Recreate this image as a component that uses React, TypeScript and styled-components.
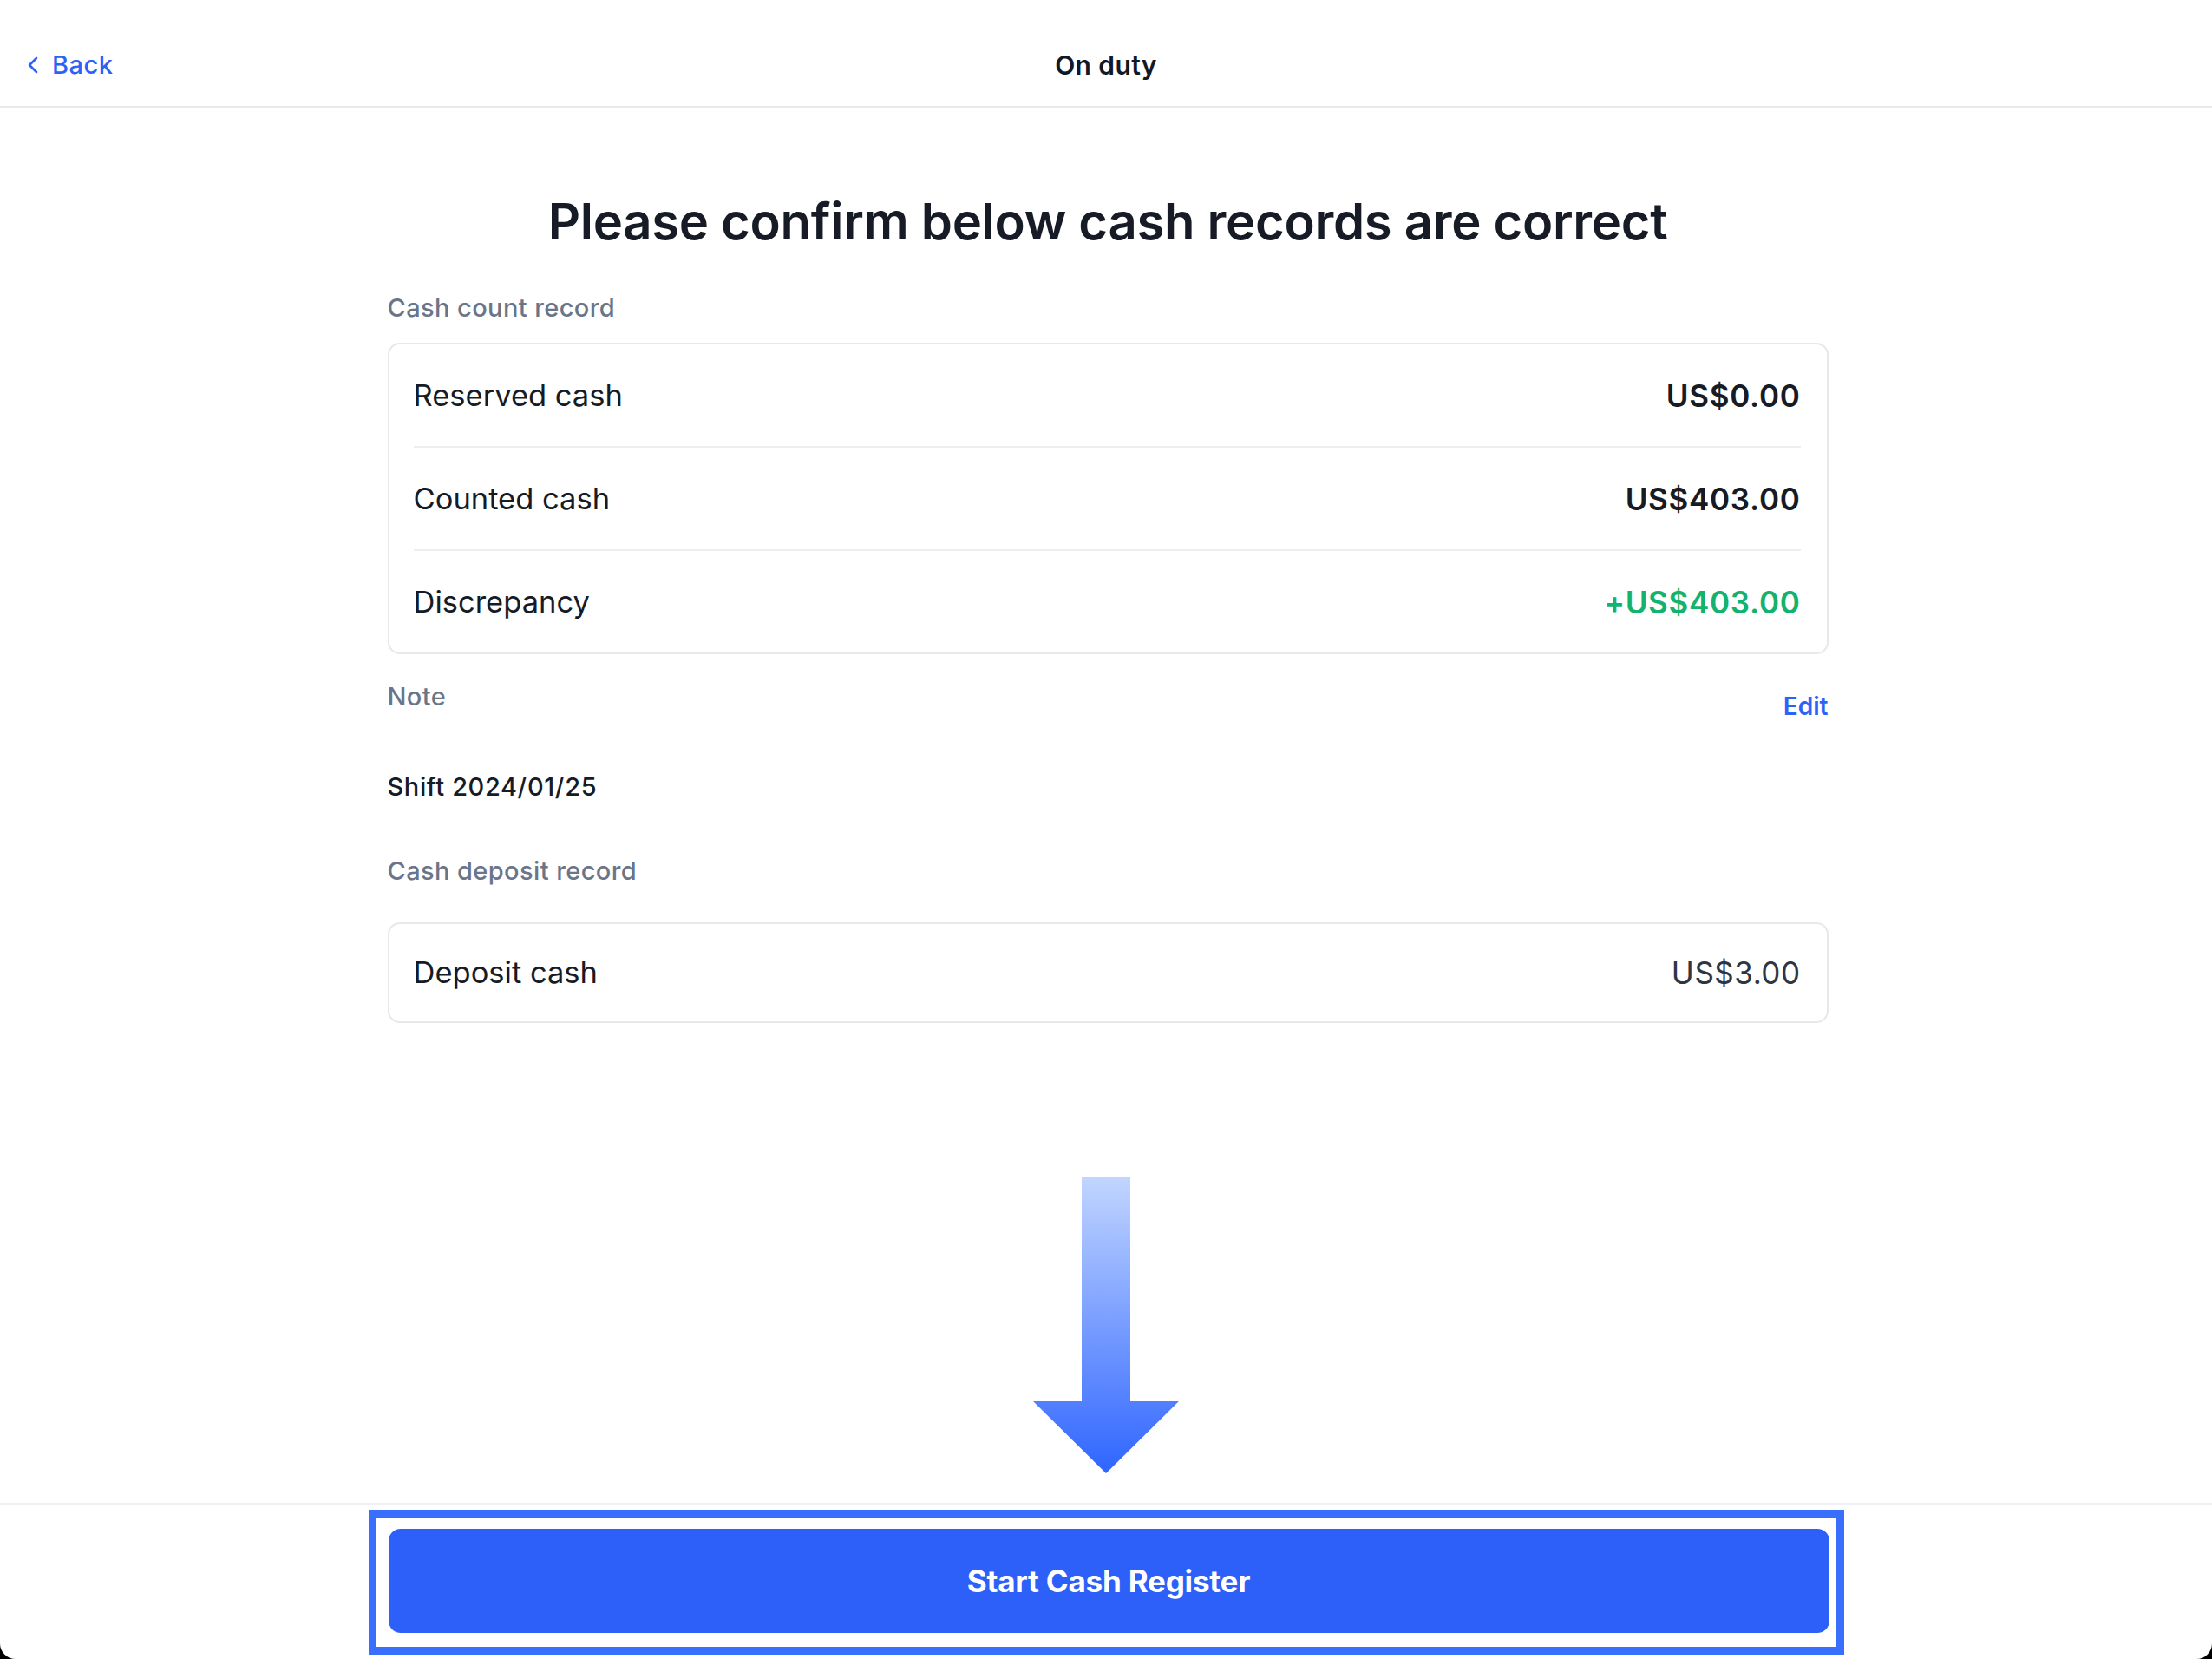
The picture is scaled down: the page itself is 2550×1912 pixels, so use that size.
import React from "react";
import styled, { createGlobalStyle } from "styled-components";

const GlobalStyle = createGlobalStyle`
  html, body {
    margin: 0;
    padding: 0;
    background: #000;
  }
  body {
    font-family: Inter, "Noto Sans", "Liberation Sans", sans-serif;
    -webkit-font-smoothing: antialiased;
  }
  * { box-sizing: border-box; }
`;

const Screen = styled.div`
  min-height: 100vh;
  display: flex;
  flex-direction: column;
  background: #ffffff;
  border-radius: 0 0 18px 18px;
  overflow: hidden;
`;

const Header = styled.header`
  height: 124px;
  flex-shrink: 0;
  border-bottom: 2px solid #e8eaee;
  display: grid;
  grid-template-columns: 1fr auto 1fr;
  align-items: end;
  padding: 0 32px 30px;
`;

const BackLink = styled.a`
  display: flex;
  align-items: center;
  gap: 16px;
  color: #2b63f6;
  font-size: 29px;
  font-weight: 500;
  letter-spacing: 0.5px;
  line-height: 34px;
  text-decoration: none;
  cursor: pointer;
  justify-self: start;
`;

const HeaderTitle = styled.div`
  font-size: 30px;
  font-weight: 600;
  letter-spacing: 0.4px;
  line-height: 34px;
  color: #111827;
`;

const Main = styled.main`
  flex: 1;
  display: flex;
  flex-direction: column;
  align-items: center;
`;

const Content = styled.div`
  width: 1661px;
  margin-left: 4px;
  display: flex;
  flex-direction: column;
`;

const Title = styled.h1`
  margin: 96px 0 0;
  font-size: 58px;
  line-height: 70px;
  font-weight: 600;
  letter-spacing: -0.3px;
  text-align: center;
  color: #161b26;
`;

const SectionLabel = styled.div<{ $gap: number }>`
  margin-top: ${(p) => p.$gap}px;
  font-size: 29px;
  line-height: 34px;
  font-weight: 500;
  letter-spacing: 0.4px;
  color: #6b7589;
`;

const Card = styled.div<{ $gap: number }>`
  margin-top: ${(p) => p.$gap}px;
  border: 2px solid #e6e8ec;
  border-radius: 14px;
  background: #fff;
  display: flex;
  flex-direction: column;
`;

const Row = styled.div<{ $height: number }>`
  flex-shrink: 0;
  height: ${(p) => p.$height}px;
  padding: 0 30px 0 28px;
  display: flex;
  align-items: center;
  justify-content: space-between;
`;

const Divider = styled.div`
  flex-shrink: 0;
  height: 2px;
  margin: 0 30px 0 28px;
  background: #eceef2;
`;

const RowLabel = styled.span`
  font-size: 34.5px;
  line-height: 40px;
  font-weight: 400;
  color: #161b26;
`;

type Tone = "strong" | "positive" | "plain";

const RowValue = styled.span<{ $tone: Tone }>`
  font-size: 35px;
  line-height: 40px;
  letter-spacing: ${(p) => (p.$tone === "plain" ? 0.5 : 0.7)}px;
  font-weight: ${(p) => (p.$tone === "plain" ? 400 : 600)};
  color: ${(p) =>
    p.$tone === "positive" ? "#14b26f" : p.$tone === "plain" ? "#2f3542" : "#161b26"};
`;

const NoteHeader = styled.div`
  margin-top: 32px;
  display: flex;
  justify-content: space-between;
  align-items: flex-start;
`;

const NoteLabel = styled.span`
  font-size: 29px;
  line-height: 34px;
  font-weight: 500;
  letter-spacing: 0.4px;
  color: #6b7589;
`;

const EditLink = styled.a`
  margin-top: 11px;
  font-size: 28px;
  line-height: 34px;
  font-weight: 600;
  color: #2b63f6;
  cursor: pointer;
`;

const NoteText = styled.div`
  margin-top: 59px;
  font-size: 29px;
  line-height: 34px;
  font-weight: 500;
  letter-spacing: 0.6px;
  color: #161b26;
`;

const ArrowWrap = styled.div`
  margin-top: 178px;
  width: 168px;
  height: 341px;
  display: flex;
`;

const Footer = styled.footer`
  flex-shrink: 0;
  border-top: 2px solid #eff1f4;
  padding: 6px 0 5px;
  display: flex;
  justify-content: center;
`;

const Highlight = styled.div`
  width: 1701px;
  border: 9px solid #3a6efc;
  padding: 13px 8px 16px 14px;
  display: flex;
`;

const PrimaryButton = styled.button`
  flex: 1;
  height: 120px;
  border: none;
  border-radius: 14px;
  background: #2c60f8;
  color: #ffffff;
  font-family: inherit;
  font-size: 35px;
  font-weight: 700;
  letter-spacing: -0.2px;
  cursor: pointer;
`;

const ChevronLeft = () => (
  <svg width="12" height="20" viewBox="0 0 12 20" fill="none">
    <polyline
      points="10,2 2,10 10,18"
      stroke="#2b63f6"
      strokeWidth="2.6"
      strokeLinecap="round"
      strokeLinejoin="round"
    />
  </svg>
);

const DownArrow = () => (
  <svg width="168" height="341" viewBox="0 0 168 341">
    <defs>
      <linearGradient id="arrowGrad" x1="0" y1="0" x2="0" y2="341" gradientUnits="userSpaceOnUse">
        <stop offset="0" stopColor="#c1d5ff" />
        <stop offset="1" stopColor="#2f65ff" />
      </linearGradient>
    </defs>
    <path d="M56 0 H112 V258 H168 L84 341 L0 258 H56 Z" fill="url(#arrowGrad)" />
  </svg>
);

const countRows: { label: string; value: string; tone: Tone }[] = [
  { label: "Reserved cash", value: "US$0.00", tone: "strong" },
  { label: "Counted cash", value: "US$403.00", tone: "strong" },
  { label: "Discrepancy", value: "+US$403.00", tone: "positive" },
];

export default function App() {
  return (
    <>
      <GlobalStyle />
      <Screen>
        <Header>
          <BackLink>
            <ChevronLeft />
            Back
          </BackLink>
          <HeaderTitle>On duty</HeaderTitle>
          <span />
        </Header>
        <Main>
          <Content>
            <Title>Please confirm below cash records are correct</Title>
            <SectionLabel $gap={48}>Cash count record</SectionLabel>
            <Card $gap={23}>
              {countRows.map((r, i) => (
                <React.Fragment key={r.label}>
                  {i > 0 && <Divider />}
                  <Row $height={117}>
                    <RowLabel>{r.label}</RowLabel>
                    <RowValue $tone={r.tone}>{r.value}</RowValue>
                  </Row>
                </React.Fragment>
              ))}
            </Card>
            <NoteHeader>
              <NoteLabel>Note</NoteLabel>
              <EditLink>Edit</EditLink>
            </NoteHeader>
            <NoteText>Shift 2024/01/25</NoteText>
            <SectionLabel $gap={63}>Cash deposit record</SectionLabel>
            <Card $gap={42}>
              <Row $height={112}>
                <RowLabel>Deposit cash</RowLabel>
                <RowValue $tone="plain">US$3.00</RowValue>
              </Row>
            </Card>
          </Content>
          <ArrowWrap>
            <DownArrow />
          </ArrowWrap>
        </Main>
        <Footer>
          <Highlight>
            <PrimaryButton>Start Cash Register</PrimaryButton>
          </Highlight>
        </Footer>
      </Screen>
    </>
  );
}
